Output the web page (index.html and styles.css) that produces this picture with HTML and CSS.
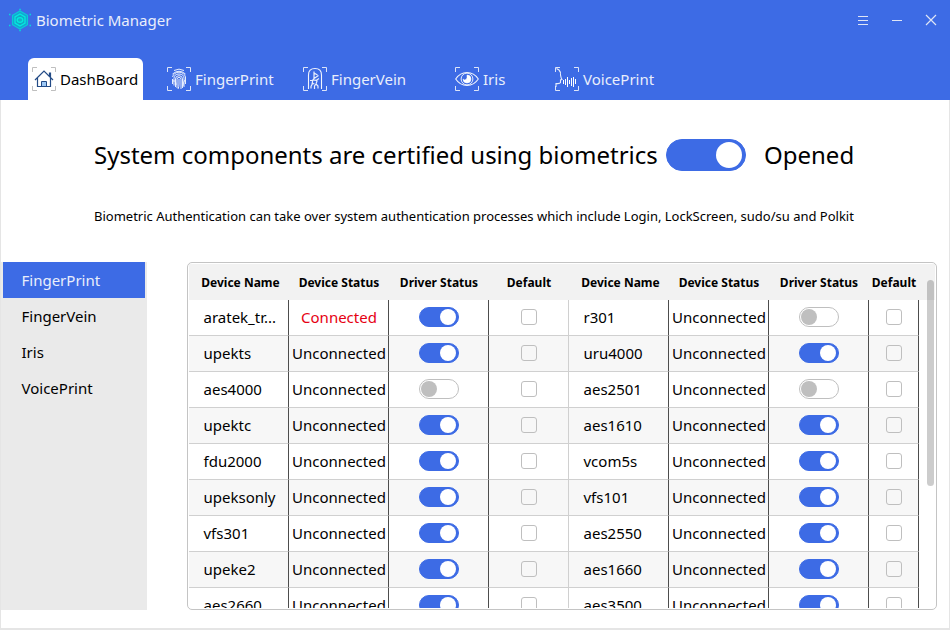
FILE: index.html
```
<!DOCTYPE html>
<html lang="en">
<head>
<meta charset="utf-8">
<title>Biometric Manager</title>
<link rel="stylesheet" href="styles.css">
</head>
<body>
<div class="window">
  <header class="top">
    <div class="titlebar">
      <svg class="logo" width="24" height="24" viewBox="0 0 24 24" fill="none">
        <path d="M12 3 19.500 7.300v9.400L12 21 4.500 16.700V7.300Z" fill="#14a5d0" stroke="#0bc9d6" stroke-width="1.200"/>
        <path d="M12 6 17 8.900v6.200L12 18 7 15.100V8.900Z" fill="#12a9c4" stroke="#04e9df" stroke-width="1.300"/>
        <ellipse cx="12" cy="12" rx="2.800" ry="2.300" fill="#0fb6c6" stroke="#04e9df" stroke-width="1.300"/>
        <path d="M11.300 1.500h1.500M1 6.500h1.500M21.500 6.500H23M1 17.500h1.500M21.500 17.500H23M11.300 22.500h1.500" stroke="#05d9dc" stroke-width="1.500"/>
      </svg>
      <span class="app-name">Biometric Manager</span>
      <svg class="controls" width="84" height="14" viewBox="0 0 84 14" fill="none" stroke="#dfe5f5">
        <path d="M1 3.500h10M1 7.500h10M1 11.500h10M35 7.500h10"/>
        <path d="m69 2 10 10M79 2 69 12" stroke-width="1.200"/>
      </svg>
    </div>
    <nav class="tabs">
      <div class="tab active">
        <svg class="icon" width="24" height="24" viewBox="0 0 24 24" fill="none">
          <path class="frame" d="M.5 5V.5H5M19 .5h4.500V5M.5 19v4.500H5M19 23.500h4.500V19"/>
          <path d="M9.500 19.500v-5h5v5" fill="#9dc8f5" stroke="#234b86"/>
          <path d="M3 13 12 4l9 9M5.500 11v8.500h13V11M17.500 9V6h1v4" stroke="#234b86" stroke-width="1.200"/>
        </svg>
        <span>DashBoard</span>
      </div>
      <div class="tab print">
        <svg class="icon" width="24" height="24" viewBox="0 0 24 24" fill="none">
          <path class="frame" d="M.5 5V.5H5M19 .5h4.500V5M.5 19v4.500H5M19 23.500h4.500V19"/>
          <g stroke="#f0f4fe" stroke-width=".95">
            <path d="M7 3.500Q12 .8 17 3.500M5.500 7Q12 1.500 18.500 7M5.500 10Q7 5.200 12 5.200T18.500 10v7M5.500 12v5M7 18.500v-7Q7 7 12 7t5 4.500V20M8.500 20v-8Q8.500 8.700 12 8.700t3.500 3.300v9M10 21v-8.500Q10 10.400 12 10.400t2 2.100V22M12 12v5"/>
            <path d="M6 14q3-1 3 4M12 17q0 3-1 5M18 13q-2 2-2 6"/>
          </g>
        </svg>
        <span>FingerPrint</span>
      </div>
      <div class="tab vein">
        <svg class="icon" width="24" height="24" viewBox="0 0 24 24" fill="none">
          <path class="frame" d="M.5 5V.5H5M19 .5h4.500V5M.5 19v4.500H5M19 23.500h4.500V19"/>
          <path d="M5.500 22V8Q5.500 1.500 12 1.500T18.500 8v14" stroke="#f2f5fd" stroke-width="1.100"/>
          <path d="M11 4.500v7l-1.500 2v3l-1.500 3v2M11 6l3.500 2M11 11.500l4.500-3M7 13.500l5-.5 2 1-1 3-1.500 2v3M13 13.500l3-2M13 17l2 2v2.500M8.500 16l3 1" stroke="#e9effc" stroke-width="1.200"/>
        </svg>
        <span>FingerVein</span>
      </div>
      <div class="tab iris">
        <svg class="icon" width="24" height="24" viewBox="0 0 24 24" fill="none">
          <path class="frame" d="M.5 5V.5H5M19 .5h4.500V5M.5 19v4.500H5M19 23.500h4.500V19"/>
          <path d="M.7 12Q5 5.500 12 5.500T23.300 12Q19 18.500 12 18.500T.7 12Z" stroke="#f2f5fd" stroke-width="1.100"/>
          <circle cx="12" cy="12" r="5.900" stroke="#e5ecfb" stroke-width="1"/>
          <path d="M12 8a4 4 0 1 1-4 4q1.500 1.500 3 .5T12 8Z" fill="#fff" stroke="#fff" stroke-width=".5"/>
        </svg>
        <span>Iris</span>
      </div>
      <div class="tab voice">
        <svg class="icon" width="24" height="24" viewBox="0 0 24 24" fill="none">
          <path class="frame" d="M.5 5V.5H5M19 .5h4.500V5M.5 19v4.500H5M19 23.500h4.500V19"/>
          <path d="M1.500 1.500 4 3q2 2 1.500 5 .5 3 1.500 4.500L5.500 13v2.500Q5 17 1 16.500V20" stroke="#e8eefc" stroke-width="1.100"/>
          <path d="M8.500 13v4M10.500 12v6M12.500 10v10M14.500 13v4M16.500 11v8M18.500 10v10M20.500 12v5" stroke="#fff"/>
        </svg>
        <span>VoicePrint</span>
      </div>
    </nav>
  </header>

  <main class="content">
    <section class="summary">
      <h1>System components are certified using biometrics</h1>
      <span class="switch large on"></span>
      <span class="state">Opened</span>
    </section>
    <p class="note">Biometric Authentication can take over system authentication processes which include Login, LockScreen, sudo/su and Polkit</p>

    <div class="panels">
      <ul class="side">
        <li class="selected">FingerPrint</li>
        <li>FingerVein</li>
        <li>Iris</li>
        <li>VoicePrint</li>
      </ul>
      <div class="table-box">
        <div class="viewport">
          <div class="row head"><b class="name">Device Name</b><b>Device Status</b><b>Driver Status</b><b>Default</b><b class="name">Device Name</b><b>Device Status</b><b>Driver Status</b><b>Default</b></div>
          <div class="row"><div class="name">aratek_tr...</div><div class="connected">Connected</div><div><span class="switch on"></span></div><div><span class="check"></span></div><div class="name">r301</div><div>Unconnected</div><div><span class="switch"></span></div><div><span class="check"></span></div></div>
          <div class="row alt"><div class="name">upekts</div><div>Unconnected</div><div><span class="switch on"></span></div><div><span class="check"></span></div><div class="name">uru4000</div><div>Unconnected</div><div><span class="switch on"></span></div><div><span class="check"></span></div></div>
          <div class="row"><div class="name">aes4000</div><div>Unconnected</div><div><span class="switch"></span></div><div><span class="check"></span></div><div class="name">aes2501</div><div>Unconnected</div><div><span class="switch"></span></div><div><span class="check"></span></div></div>
          <div class="row alt"><div class="name">upektc</div><div>Unconnected</div><div><span class="switch on"></span></div><div><span class="check"></span></div><div class="name">aes1610</div><div>Unconnected</div><div><span class="switch on"></span></div><div><span class="check"></span></div></div>
          <div class="row"><div class="name">fdu2000</div><div>Unconnected</div><div><span class="switch on"></span></div><div><span class="check"></span></div><div class="name">vcom5s</div><div>Unconnected</div><div><span class="switch on"></span></div><div><span class="check"></span></div></div>
          <div class="row alt"><div class="name">upeksonly</div><div>Unconnected</div><div><span class="switch on"></span></div><div><span class="check"></span></div><div class="name">vfs101</div><div>Unconnected</div><div><span class="switch on"></span></div><div><span class="check"></span></div></div>
          <div class="row"><div class="name">vfs301</div><div>Unconnected</div><div><span class="switch on"></span></div><div><span class="check"></span></div><div class="name">aes2550</div><div>Unconnected</div><div><span class="switch on"></span></div><div><span class="check"></span></div></div>
          <div class="row alt"><div class="name">upeke2</div><div>Unconnected</div><div><span class="switch on"></span></div><div><span class="check"></span></div><div class="name">aes1660</div><div>Unconnected</div><div><span class="switch on"></span></div><div><span class="check"></span></div></div>
          <div class="row"><div class="name">aes2660</div><div>Unconnected</div><div><span class="switch on"></span></div><div><span class="check"></span></div><div class="name">aes3500</div><div>Unconnected</div><div><span class="switch on"></span></div><div><span class="check"></span></div></div>
        </div>
        <span class="scrollbar"></span>
      </div>
    </div>
  </main>
</div>
</body>
</html>
```
FILE: styles.css
```
* {
  box-sizing: border-box;
}

body {
  margin: 0;
  font: 15px/20px "Noto Sans", sans-serif;
  color: #000;
}

.window {
  width: 950px;
  height: 630px;
  overflow: hidden;
  display: flex;
  flex-direction: column;
  background: #fff;
}

.top {
  height: 100px;
  flex: none;
  background: #3d6be5;
  color: #e9eefb;
}

.titlebar {
  height: 40px;
  display: flex;
  align-items: center;
  padding: 0 9px 0 8px;
}

.app-name {
  margin-left: 4px;
}

.controls {
  margin-left: auto;
}

.tabs {
  display: flex;
  padding: 18px 0 0 28px;
}

.tab {
  width: 115px;
  height: 42px;
  display: flex;
  align-items: center;
  gap: 4px;
  padding-left: 4px;
}

.tab.active {
  background: #fff;
  color: #000;
  border-radius: 6px 6px 0 0;
}

.print {
  margin-left: 20px;
}

.vein {
  margin-left: 21px;
}

.iris {
  margin-left: 37px;
}

.voice {
  margin-left: -15px;
}

.icon {
  flex: none;
}

.frame {
  stroke: #dce4f8;
}

.active .frame {
  stroke: #bfbfbf;
}

.content {
  flex: 1;
  border: solid #e5e5e5;
  border-width: 0 1px 2px;
}

.summary {
  height: 110px;
  display: flex;
  align-items: center;
  padding-left: 93px;
  font-size: 24px;
  line-height: 32px;
}

h1 {
  width: 572px;
  margin: 0;
  font: inherit;
  letter-spacing: -.01px;
  white-space: nowrap;
}

.state {
  margin-left: 18px;
}

.note {
  height: 14px;
  margin: 0 0 38px;
  padding-left: 93px;
  font-size: 13px;
  line-height: 12px;
  letter-spacing: -.005px;
  white-space: nowrap;
}

.panels {
  display: flex;
  gap: 40px;
  height: 348px;
}

.side {
  width: 146px;
  margin: 0;
  padding: 0 2px;
  list-style: none;
  background: #eaeaea;
}

.side li {
  height: 36px;
  padding-left: 18.5px;
  line-height: 37px;
}

.side .selected {
  background: #3d6be5;
  color: #e9eefb;
}

.table-box {
  position: relative;
  width: 750px;
  padding: 1px;
  border: 1px solid #c4c4c4;
  border-radius: 5px;
}

.viewport {
  height: 344px;
  overflow: hidden;
}

.row {
  width: 730px;
  height: 36px;
  display: grid;
  grid-template-columns: 100px 100px 100px 80px 100px 100px 100px 50px;
}

.row > div {
  display: flex;
  align-items: center;
  justify-content: center;
  padding: 0 0 1px 1px;
  border-right: 1px solid #4d4d4d;
  border-bottom: 1px solid #d0d0d0;
}

.row > div:nth-child(4) {
  border-right-color: #d0d0d0;
}

.row > div.name {
  justify-content: flex-start;
  padding-left: 14.5px;
}

.row > .connected {
  color: #e60012;
}

.row.alt {
  background: #f7f7f7;
}

.row.head {
  width: 746px;
  background: #f2f2f2;
  font-size: 12px;
  line-height: 37px;
  text-align: center;
  white-space: nowrap;
}

.head .name {
  padding-left: 3px;
}

.switch {
  width: 40px;
  height: 20px;
  display: flex;
  flex: none;
  align-items: center;
  padding: 0 2px 0 1px;
  border: 1px solid #bfbfbf;
  border-radius: 10px;
  background: #fff;
}

.switch::before {
  content: "";
  width: 16px;
  height: 16px;
  border-radius: 50%;
  background: #bfbfbf;
}

.switch.on {
  justify-content: flex-end;
  border-color: #3d6be5;
  background: #3d6be5;
}

.switch.on::before {
  background: #fff;
}

.switch.large {
  width: 80px;
  height: 32px;
  padding-right: 3px;
  border-radius: 16px;
}

.switch.large::before {
  width: 26px;
  height: 26px;
}

.check {
  width: 16px;
  height: 16px;
  border: 1px solid #bfbfbf;
  border-radius: 3px;
}

.scrollbar {
  position: absolute;
  top: 17px;
  right: 2px;
  width: 7px;
  height: 206px;
  border-radius: 3.5px;
  background: rgba(0, 0, 0, .2);
}
```
